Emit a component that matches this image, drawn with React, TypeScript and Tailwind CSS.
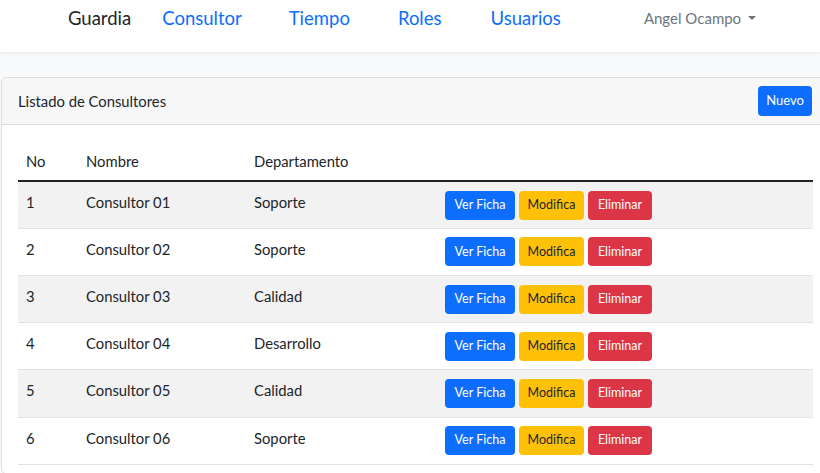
import React from "react";

const rows = [
  { no: 1, nombre: "Consultor 01", dep: "Soporte" },
  { no: 2, nombre: "Consultor 02", dep: "Soporte" },
  { no: 3, nombre: "Consultor 03", dep: "Calidad" },
  { no: 4, nombre: "Consultor 04", dep: "Desarrollo" },
  { no: 5, nombre: "Consultor 05", dep: "Calidad" },
  { no: 6, nombre: "Consultor 06", dep: "Soporte" },
];

export default function App() {
  return (
    <div
      className="min-h-[473px] w-[820px] overflow-hidden bg-[#f8f9fa] text-[#212529]"
      style={{ fontFamily: "Lato, 'Noto Sans', sans-serif" }}
    >
      <nav className="flex h-[52px] items-start bg-white shadow-[0_1px_3px_rgba(0,0,0,0.08)] pt-[5px]">
        <span className="ml-[68px] text-[18.5px] leading-[26px] text-[#212529]">Guardia</span>
        <span className="ml-[31px] text-[18.5px] leading-[26px] text-[#0d6efd]">Consultor</span>
        <span className="ml-[47px] text-[18.5px] leading-[26px] text-[#0d6efd]">Tiempo</span>
        <span className="ml-[48px] text-[18.5px] leading-[26px] text-[#0d6efd]">Roles</span>
        <span className="ml-[49px] text-[18.5px] leading-[26px] text-[#0d6efd]">Usuarios</span>
        <span className="ml-[83px] flex items-center text-[15px] leading-[26px] text-[#6c757d]">
          Angel Ocampo
          <span className="ml-[7px] inline-block h-0 w-0 border-x-[4px] border-t-[4px] border-x-transparent border-t-[#6c757d]" />
        </span>
      </nav>

      <div className="mt-[25px] ml-[1px] w-[830px] rounded-[5px] border border-[#dcdcdc] bg-white">
        <div className="flex h-[47px] items-center rounded-t-[5px] border-b border-[#dcdcdc] bg-[#f7f7f7] pl-[16px] pr-[17px]">
          <span className="text-[14.8px]">Listado de Consultores</span>
          <span className="ml-auto mr-[1px] flex h-[30px] w-[54px] items-center justify-center rounded-[4px] bg-[#0d6efd] text-[13px] text-white">
            Nuevo
          </span>
        </div>
        <div className="pl-[16px] pt-[25px] pb-[8px]">
          <table className="w-[795px] table-fixed border-collapse text-[14.8px]">
            <colgroup>
              <col className="w-[60px]" />
              <col className="w-[168px]" />
              <col className="w-[191px]" />
              <col />
            </colgroup>
            <thead>
              <tr className="h-[30px] border-b-2 border-[#212529]">
                <th className="px-[8px] pb-[8px] text-left align-middle font-normal">No</th>
                <th className="px-[8px] pb-[8px] text-left align-middle font-normal">Nombre</th>
                <th className="px-[8px] pb-[8px] text-left align-middle font-normal">Departamento</th>
                <th />
              </tr>
            </thead>
            <tbody>
              {rows.map((r, i) => (
                <tr
                  key={r.no}
                  className={`h-[47.2px] border-b border-[#dee2e6] ${i % 2 === 0 ? "bg-[#f2f2f2]" : "bg-white"}`}
                >
                  <td className="px-[8px] pb-[6px] align-middle">{r.no}</td>
                  <td className="px-[8px] pb-[6px] align-middle">{r.nombre}</td>
                  <td className="px-[8px] pb-[6px] align-middle">{r.dep}</td>
                  <td className="px-[8px] align-middle">
                    <div className="flex gap-[4px]">
                      <span className="flex h-[29px] w-[70px] items-center justify-center rounded-[4px] bg-[#0d6efd] text-[12.5px] text-white">
                        Ver Ficha
                      </span>
                      <span className="flex h-[29px] w-[65px] items-center justify-center rounded-[4px] bg-[#ffc107] text-[12.5px] text-[#212529]">
                        Modifica
                      </span>
                      <span className="flex h-[29px] w-[64px] items-center justify-center rounded-[4px] bg-[#dc3545] text-[12.5px] text-white">
                        Eliminar
                      </span>
                    </div>
                  </td>
                </tr>
              ))}
            </tbody>
          </table>
        </div>
      </div>
    </div>
  );
}
